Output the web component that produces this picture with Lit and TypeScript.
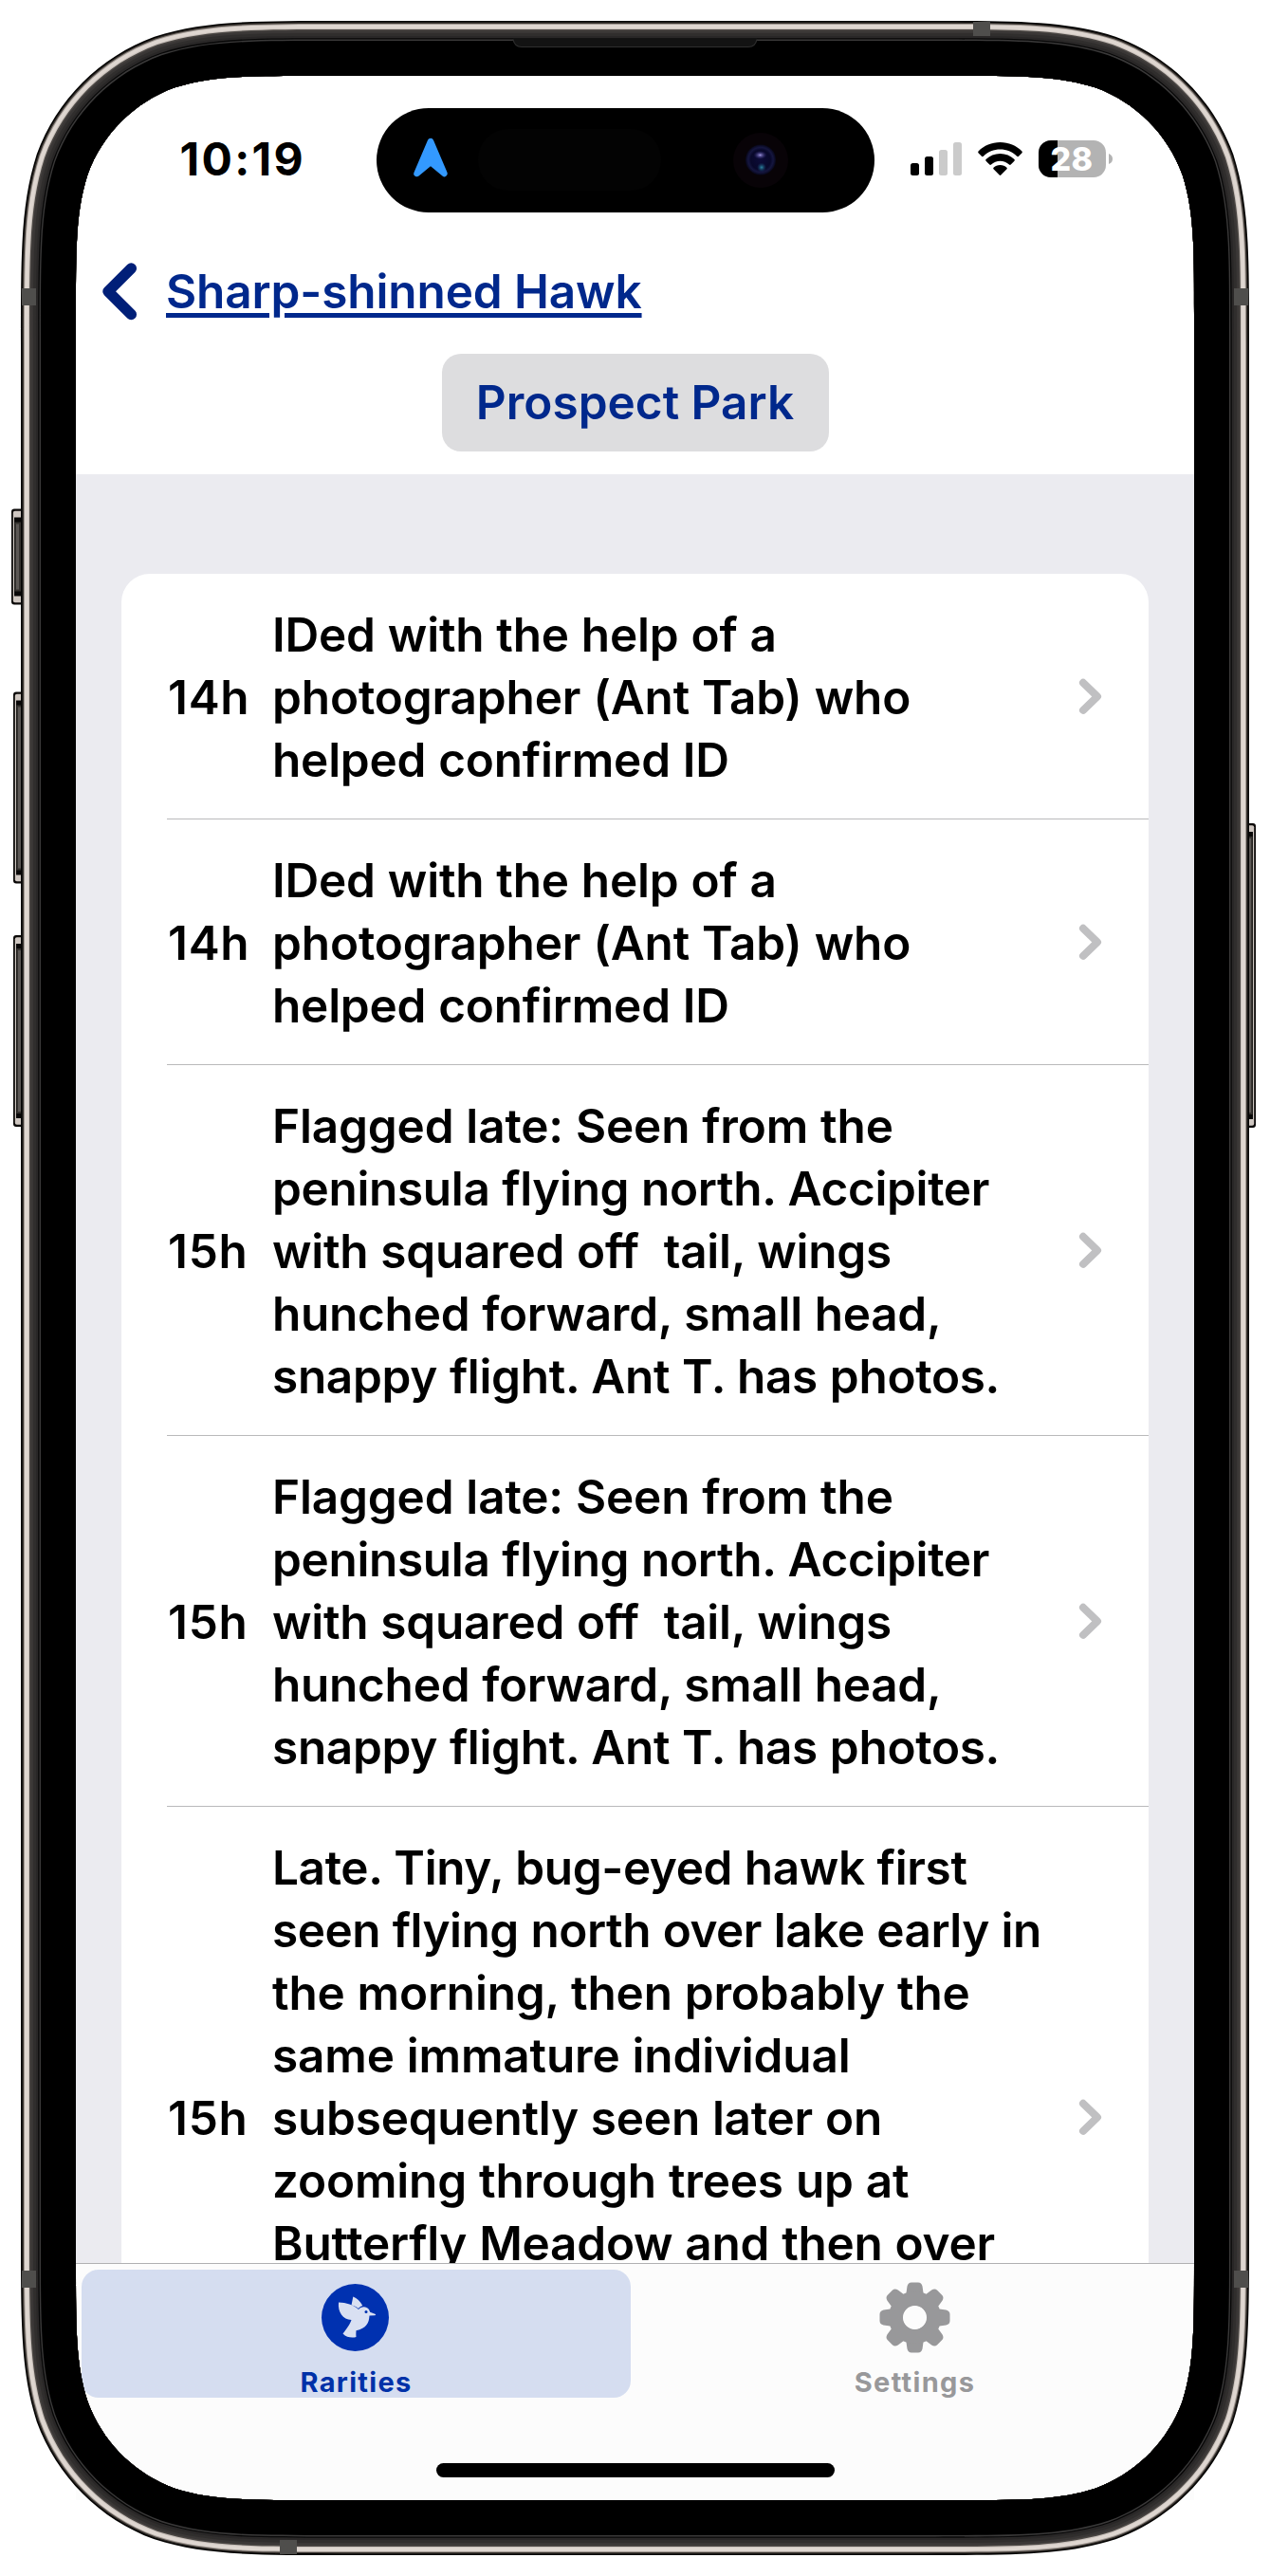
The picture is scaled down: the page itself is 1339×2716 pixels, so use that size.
import { LitElement, html, css, svg } from "lit";
import { customElement, property } from "lit/decorators.js";
import { styleMap } from "lit/directives/style-map.js";

// Rounded rectangle with continuous-curvature corners, as an SVG path.
const squircle = (inset: number, radius: number) => {
  const l = 22 + inset, t = 22 + inset, r = 1317 - inset, b = 2694 - inset;
  const [a, c, d, e, f, g, h] = [1.52866483, 1.08849299, 0.86840694, 0.63149379, 0.07491139, 0.37282383, 0.16905956].map((k) => k * radius);
  return (
    `M${l + a} ${t}L${r - a} ${t}` +
    `C${r - c} ${t} ${r - d} ${t} ${r - e} ${t + f}C${r - g} ${t + h} ${r - h} ${t + g} ${r - f} ${t + e}C${r} ${t + d} ${r} ${t + c} ${r} ${t + a}` +
    `L${r} ${b - a}C${r} ${b - c} ${r} ${b - d} ${r - f} ${b - e}C${r - h} ${b - g} ${r - g} ${b - h} ${r - e} ${b - f}C${r - d} ${b} ${r - c} ${b} ${r - a} ${b}` +
    `L${l + a} ${b}C${l + c} ${b} ${l + d} ${b} ${l + e} ${b - f}C${l + g} ${b - h} ${l + h} ${b - g} ${l + f} ${b - e}C${l} ${b - d} ${l} ${b - c} ${l} ${b - a}` +
    `L${l} ${t + a}C${l} ${t + c} ${l} ${t + d} ${l + f} ${t + e}C${l + h} ${t + g} ${l + g} ${t + h} ${l + e} ${t + f}C${l + d} ${t} ${l + c} ${t} ${l + a} ${t}Z`
  );
};

const HOLE = squircle(58, 165);
// Metal band, from the outer edge inwards: [inset, colour].
const BANDS: [number, string][] = [
  [0, "#050403"], [1.6, "#3b3632"], [3, "#a39b95"], [4, "#ded6d0"], [8, "#c9c1bb"], [9, "#4a4643"],
  [10.5, "#3a3736"], [13, "#302e2d"], [16, "#292727"], [18.3, "#070707"], [19.6, "#3a3939"], [21, "#000"],
];

@customElement("device-frame")
export class DeviceFrame extends LitElement {
  static styles = css`
    :host { display: block; pointer-events: none; }
    svg { display: block; }
  `;
  private sideButton(x: number, y: number, w: number, h: number, flip: boolean) {
    const t = flip ? `translate(${x + w} ${y}) scale(-1 1)` : `translate(${x} ${y})`;
    return svg`<g transform=${t}>
      <rect width=${w + 4} height=${h} rx="3" fill="#0b0908"/>
      <rect x="1.8" y="2.2" width=${w + 2} height=${h - 4.4} rx="2" fill="#cfc7c1"/>
      <rect x="3" y="9" width=${w} height=${h - 18} fill="#080707"/>
      <rect x="3.5" y="14" width=${w} height=${h - 28} fill="#35322f"/>
      <rect x="5" y="16" width="3" height=${h - 32} fill="#5c5855"/>
    </g>`;
  }
  private antenna(x: number, y: number, w: number, h: number) {
    return svg`<rect x=${x} y=${y} width=${w} height=${h} fill="#4f4e4c"/>`;
  }
  render() {
    return html`<svg width="1339" height="2716" viewBox="0 0 1339 2716">
      ${this.sideButton(12, 536.5, 10, 101, false)}
      ${this.sideButton(14, 729.5, 8, 202, false)}
      ${this.sideButton(14, 986, 8, 202, false)}
      ${this.sideButton(1317, 868, 7, 321, true)}
      ${BANDS.map(([inset, fill]) => svg`<path fill-rule="evenodd" fill=${fill} d=${squircle(inset, 223 - inset) + HOLE}/>`)}
      ${this.antenna(23, 304, 15, 18)}
      ${this.antenna(1301, 304, 15, 18)}
      ${this.antenna(23, 2394, 15, 18)}
      ${this.antenna(1301, 2394, 15, 18)}
      ${this.antenna(1026, 23, 18, 15)}
      ${this.antenna(295, 2678, 18, 15)}
      <rect x="541" y="40" width="257" height="3.500" fill="#131313"/>
      <path d="M541 41.500q1.500 8 9 8h239q7.500 0 9-8" fill="#131313" stroke="#2f2f2f" stroke-width="1.200"/>
    </svg>`;
  }
}

@customElement("status-bar")
export class StatusBar extends LitElement {
  static styles = css`
    :host { display: grid; grid-template-columns: 317px 525px 337px; height: 177px; box-sizing: border-box; padding-top: 34px; }
    .time { padding: 29px 0 0 109.5px; font-size: 48px; line-height: 50px; font-weight: 700; letter-spacing: 2.3px; }
    .island, .right { display: block; }
    .right { margin-top: 29px; }
    text { font: 800 34px Inter, sans-serif; letter-spacing: 0.3px; }
  `;
  render() {
    return html`
      <div class="time">10:19</div>
      <svg class="island" width="525" height="111" viewBox="397 114 525 111">
        <defs>
          <radialGradient id="glass" cx=".5" cy=".5" r=".5">
            <stop offset="0" stop-color="#0c0b38"/><stop offset=".65" stop-color="#08082a"/>
            <stop offset=".82" stop-color="#15163f"/><stop offset="1" stop-color="#07071a"/>
          </radialGradient>
          <radialGradient id="shine"><stop offset="0" stop-color="#9c92dc"/><stop offset="1" stop-color="#2a2470" stop-opacity="0"/></radialGradient>
          <radialGradient id="teal"><stop offset="0" stop-color="#2c86a0"/><stop offset="1" stop-color="#14406a" stop-opacity="0"/></radialGradient>
        </defs>
        <rect x="397" y="114" width="525" height="110" rx="55"/>
        <rect x="504" y="136" width="193" height="65" rx="32" fill="#030303"/>
        <path d="M454 149L439.500 183L454 171L468.500 183Z" fill="#3399ff" stroke="#3399ff" stroke-width="6.500" stroke-linejoin="round"/>
        <circle cx="802" cy="169" r="29" fill="#080307"/>
        <circle cx="802" cy="168.500" r="16" fill="url(#glass)"/>
        <ellipse cx="801.500" cy="163.500" rx="7" ry="4.500" fill="url(#shine)"/>
        <circle cx="803" cy="176.500" r="5" fill="url(#teal)"/>
      </svg>
      <svg class="right" width="260" height="50" viewBox="922 143 260 50">
        <rect x="960" y="172" width="9" height="13" rx="2.500"/>
        <rect x="975" y="165" width="9" height="20" rx="2.500"/>
        <rect x="990" y="158" width="9" height="27" rx="2.500" fill="#cbcbcb"/>
        <rect x="1005" y="150" width="9" height="35" rx="2.500" fill="#cbcbcb"/>
        <path d="M1054.500 150c9 0 17 3.400 23 9.500q.7 1 0 1.800l-3.500 3.500q-.8.800-1.800 0c-5-4.700-11-7.200-17.700-7.200s-12.700 2.500-17.700 7.200q-1 .8-1.800 0l-3.500-3.500q-.7-.8 0-1.800c6-6.100 14-9.500 23-9.500z"/>
        <path d="M1054.500 162c5.700 0 11 2.200 15 6q.7.800 0 1.700l-3.800 3.800q-.8.800-1.700 0c-2.600-2.400-6-3.800-9.500-3.800s-6.900 1.400-9.500 3.800q-.9.800-1.700 0l-3.800-3.800q-.7-.9 0-1.700c4-3.800 9.300-6 15-6z"/>
        <path d="M1054.500 174c3 0 5 1 7 2.700q.7.800 0 1.600l-6.200 6.200q-.8.800-1.600 0l-6.200-6.200q-.7-.8 0-1.600c2-1.700 4-2.700 7-2.700z"/>
        <clipPath id="cell"><rect x="1095" y="148" width="71" height="39" rx="13"/></clipPath>
        <g clip-path="url(#cell)">
          <rect x="1095" y="148" width="71" height="39" fill="#b3b3b3"/>
          <rect x="1095" y="148" width="20" height="39"/>
        </g>
        <path d="M1169 162q4 1.500 4 5.500t-4 5.500z" fill="#b3b3b3"/>
        <text x="1130" y="179.500" text-anchor="middle" fill="#fff">28</text>
      </svg>`;
  }
}

@customElement("nav-header")
export class NavHeader extends LitElement {
  static styles = css`
    :host { display: block; height: 243px; box-sizing: border-box; color: #00288c; }
    .back { display: flex; align-items: center; gap: 26px; padding: 17px 0 0 26px; height: 66px; }
    .link { white-space: nowrap; letter-spacing: -0.12px; text-decoration: underline; text-decoration-thickness: 5px; text-underline-offset: 4.5px; }
    .place { display: flex; justify-content: center; width: 408px; margin: 33px auto 0; padding: 18px 0; border-radius: 20px; background: #dddddf; line-height: 67px; white-space: nowrap; }
  `;
  render() {
    return html`
      <div class="back">
        <svg width="43" height="62" viewBox="106 276 43 62"><path d="M138.300 283L114 307.200L138.300 331.500" fill="none" stroke="#001f78" stroke-width="11.500" stroke-linecap="round" stroke-linejoin="round"/></svg>
        <a class="link">Sharp-shinned Hawk</a>
      </div>
      <div class="place">Prospect Park</div>`;
  }
}

// A line of a note and its tracking in pixels.
type Line = [text: string, tracking: number];

@customElement("sighting-row")
export class SightingRow extends LitElement {
  @property() hour = "";
  @property({ attribute: false }) lines: Line[] = [];
  static styles = css`
    :host { display: grid; grid-template-columns: 111px 1fr 28px; align-items: center; box-sizing: border-box; margin-left: 48px; padding: 31px 47px 29px 0; border-bottom: 1px solid #b9b9bb; }
    :host(.long) { height: 654px; border-bottom: 0; }
    :host(.long) .note { align-self: start; }
    .note { white-space: pre; word-spacing: 0.7px; }
    .hour { letter-spacing: 0.7px; padding-left: 1px; }
    svg { display: block; margin-top: -2px; }
  `;
  render() {
    return html`
      <div class="hour">${this.hour}</div>
      <div class="note">${this.lines.map(([text, tracking]) => html`<div style=${styleMap({ letterSpacing: `${tracking}px` })}>${text}</div>`)}</div>
      <svg width="28" height="40" viewBox="0 0 28 40"><path d="M6 5.800L21 20.300L6 34.800" fill="none" stroke="#c0c0c2" stroke-width="8" stroke-linecap="round" stroke-linejoin="round"/></svg>`;
  }
}

@customElement("tab-bar")
export class TabBar extends LitElement {
  static styles = css`
    :host { display: grid; grid-template-columns: 589px 579px; align-items: start; align-content: start; height: 250px; box-sizing: border-box; padding: 6px 0 0 6px; border-top: 1px solid #b0b0b2; background: #fcfcfc; font-size: 29px; line-height: 36px; font-weight: 700; color: #98989a; }
    .tab { display: flex; flex-direction: column; align-items: center; width: 579px; height: 135px; border-radius: 18px; letter-spacing: 1.3px; }
    .tab.on { background: #d5ddf0; color: #0031a8; }
    .tab svg { display: block; flex: none; margin: 13px 0; }
    .home { grid-column: 1 / 3; justify-self: center; width: 420px; height: 15px; margin-top: 69px; border-radius: 8px; background: #000; }
  `;
  render() {
    const teeth = [0, 45, 90, 135, 180, 225, 270, 315];
    return html`
      <div class="tab on">
        <svg width="75" height="75" viewBox="338 2406 75 75">
          <circle cx="374.500" cy="2443.500" r="35.500" fill="#0031b0"/>
          <g fill="#d9e0f2">
            <path d="M357 2427.500c8 .2 16 2.500 21 7.500c2.500-3.200 8-4 11 0l1.200 2.800 5.800 2.200q.3 1.200-1 1.300l-5.500.2c-.5 8-3 13-14 15.800q-.3 3.500 0 6.700c-4 1.200-10 .8-14-3.500c4.500-6 7-9 9-14.500c-9-.5-14.500-8-13.500-18.500z"/>
            <path d="M370.500 2430.500l1.800-9c4 1.300 7.500 5 10 9.500c-2 .7-3.300 1.800-4.500 3c-2-1.800-4.500-3-7.300-3.500z"/>
          </g>
          <circle cx="386" cy="2437.500" r="1.500" fill="#0031b0"/>
        </svg>
        Rarities
      </div>
      <div class="tab">
        <svg width="75" height="75" viewBox="-37.500 -37.500 75 75">
          <g fill="#98989a">
            ${teeth.map((a) => svg`<path transform="rotate(${a})" d="M-12 -22Q-9.500 -23 -9 -26L-8 -33Q-7 -37 -3.500 -37H3.500Q7 -37 8 -33L9 -26Q9.500 -23 12 -22L10 -14H-10Z"/>`)}
            <circle r="20" fill="none" stroke="#98989a" stroke-width="15"/>
          </g>
          <circle r="12" fill="#fcfcfc"/>
        </svg>
        Settings
      </div>
      <div class="home"></div>`;
  }
}

const FIRST: Line[] = [["IDed with the help of a", -0.2], ["photographer (Ant Tab) who", -0.15], ["helped confirmed ID", -0.22]];
const SECOND: Line[] = [
  ["Flagged late: Seen from the", -0.17], ["peninsula flying north. Accipiter", -0.34], ["with squared off  tail, wings", -0.25],
  ["hunched forward, small head,", -0.28], ["snappy flight. Ant T. has photos.", -0.31],
];
const THIRD: Line[] = [
  ["Late. Tiny, bug-eyed hawk first", -0.38], ["seen flying north over lake early in", -0.48], ["the morning, then probably the", -0.19],
  ["same immature individual", -0.17], ["subsequently seen later on", -0.23], ["zooming through trees up at", -0.17], ["Butterfly Meadow and then over", -0.24],
];

@customElement("app-root")
export class AppRoot extends LitElement {
  static styles = css`
    :host { display: block; position: relative; width: 1339px; height: 2716px; background: #fff; overflow: hidden; box-sizing: border-box; padding: 80px; font-family: Inter, "Liberation Sans", sans-serif; font-size: 49.5px; line-height: 66px; font-weight: 560; color: #000; }
    .screen { display: flex; flex-direction: column; width: 1179px; height: 2556px; overflow: hidden; }
    .list { flex: 1; min-height: 0; overflow: hidden; background: #ebebf0; padding: 105px 48px 0; }
    .card { background: #fff; border-radius: 30px 30px 0 0; }
    status-bar, nav-header, tab-bar { flex: none; }
    device-frame { position: absolute; inset: 0; }
  `;
  render() {
    return html`
      <div class="screen">
        <status-bar></status-bar>
        <nav-header></nav-header>
        <div class="list">
          <div class="card">
            <sighting-row .hour=${"14h"} .lines=${FIRST}></sighting-row>
            <sighting-row .hour=${"14h"} .lines=${FIRST}></sighting-row>
            <sighting-row .hour=${"15h"} .lines=${SECOND}></sighting-row>
            <sighting-row .hour=${"15h"} .lines=${SECOND}></sighting-row>
            <sighting-row class="long" .hour=${"15h"} .lines=${THIRD}></sighting-row>
          </div>
        </div>
        <tab-bar></tab-bar>
      </div>
      <device-frame></device-frame>`;
  }
}
